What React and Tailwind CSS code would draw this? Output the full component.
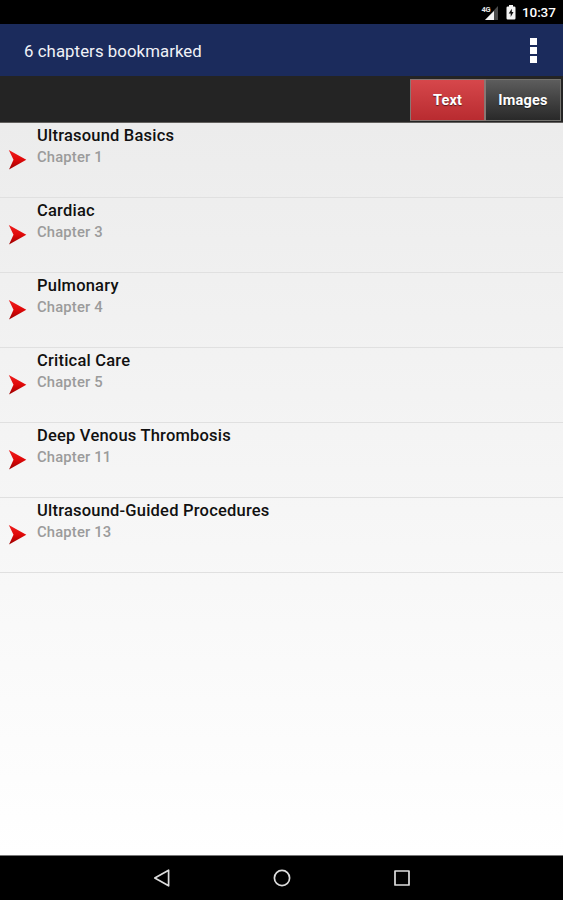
const chapters = [
  { title: "Ultrasound Basics", number: 1 },
  { title: "Cardiac", number: 3 },
  { title: "Pulmonary", number: 4 },
  { title: "Critical Care", number: 5 },
  { title: "Deep Venous Thrombosis", number: 11 },
  { title: "Ultrasound-Guided Procedures", number: 13 },
];

function StatusBar() {
  return (
    <header className="flex h-6 shrink-0 items-center justify-end bg-black pr-[7px] text-white">
      <svg width="18" height="15" viewBox="0 0 18 15" className="mr-[7px]">
        <path d="M17 1v14H4z" fill="#4b4b4b" />
        <path d="M13 6v9H4z" fill="#f5f5f5" />
        <text x="0.5" y="7" fontSize="7.5" fontWeight="700" textLength="9" fill="#e5e5e5">4G</text>
      </svg>
      <svg width="10" height="15" viewBox="0 0 10 15" className="mr-[6px]">
        <path d="M3 0h4v1.5h1.2q1.3 0 1.3 1.2v10.6q0 1.2-1.2 1.2H1.7q-1.2 0-1.2-1.2V2.7q0-1.2 1.3-1.2H3z" fill="#f5f5f5" />
        <path d="M5.8 3.8 2.7 8.5h2v3.4l2.8-4.8h-1.7z" fill="#111" />
      </svg>
      <span className="w-[34px] whitespace-nowrap text-[13.5px] font-medium leading-[25px] tracking-[-0.1px]">10:37</span>
    </header>
  );
}

function TitleBar() {
  return (
    <div className="flex h-[52px] shrink-0 items-center justify-between bg-[#1b2b5c] pl-6 pr-[26px]">
      <h1 className="pt-[3px] text-[16.8px] tracking-[0.07px] text-[#f0f2f7]">6 chapters bookmarked</h1>
      <button aria-label="More options" className="flex flex-col gap-[2px]">
        <span className="size-[7px] bg-white" />
        <span className="size-[7px] bg-white" />
        <span className="size-[7px] bg-white" />
      </button>
    </div>
  );
}

function Tabs() {
  return (
    <div className="flex h-[47px] shrink-0 justify-end border-b border-[#62605e] bg-[#242424] pb-px pr-[2px] pt-[3px] text-[14.5px] font-bold text-white">
      <button className="w-[76px] border border-r-2 border-[#887774] bg-linear-to-b from-[#d6474b] to-[#b92b30] pt-[2px] tracking-[0.1px] [text-shadow:0_1px_1px_#0008]">Text</button>
      <button className="w-[75px] border-y border-r border-[#74736f] bg-linear-to-b from-[#5d5d5d] to-[#292929] pt-[2px] tracking-[0.2px] [text-shadow:0_1px_1px_#0008]">Images</button>
    </div>
  );
}

function Arrow() {
  return (
    <svg width="19" height="21" viewBox="0 0 19 21" className="ml-2 mt-[26px] shrink-0">
      <defs>
        <linearGradient id="arrow-red" x2="0" y2="1">
          <stop stopColor="#f02020" />
          <stop offset=".5" stopColor="#e00808" />
          <stop offset="1" stopColor="#990000" />
        </linearGradient>
      </defs>
      <path d="M.8 1 18.3 10.8 1 20.5 5.5 10.8z" fill="url(#arrow-red)" />
    </svg>
  );
}

function ChapterRow({ title, number }) {
  return (
    <li className="flex h-[75px] border-b border-[#e0e0e0]">
      <Arrow />
      <div className="ml-[10px] pt-[2px]">
        <h2 className="text-[16.5px] font-medium leading-[22px] tracking-[0.21px] text-[#111]">{title}</h2>
        <p className="text-[14.8px] font-medium leading-[21px] tracking-[0.16px] text-[#9b9b9b]">Chapter {number}</p>
      </div>
    </li>
  );
}

function NavigationBar() {
  return (
    <nav className="flex h-[45px] shrink-0 items-center justify-center gap-[102px] border-t border-[#777] bg-black">
      <button aria-label="Back">
        <svg width="18" height="18" viewBox="0 0 18 18" fill="none" stroke="#ddd" strokeWidth="1.7" strokeLinejoin="round">
          <path d="M15.6 1.2v15.6L1.8 9z" />
        </svg>
      </button>
      <button aria-label="Home">
        <svg width="18" height="18" viewBox="0 0 18 18" fill="none" stroke="#ddd" strokeWidth="1.7">
          <circle cx="9" cy="9" r="7.6" />
        </svg>
      </button>
      <button aria-label="Recent apps">
        <svg width="18" height="18" viewBox="0 0 18 18" fill="none" stroke="#ddd" strokeWidth="1.7" strokeLinejoin="round">
          <rect x="2" y="2" width="14" height="14" />
        </svg>
      </button>
    </nav>
  );
}

export default function App() {
  return (
    <div className="flex h-screen w-full flex-col overflow-hidden bg-white font-[Roboto,sans-serif]">
      <StatusBar />
      <TitleBar />
      <Tabs />
      <main className="min-h-0 flex-1 bg-linear-to-b from-[#ececec] to-white">
        <ul>
          {chapters.map((chapter) => (
            <ChapterRow key={chapter.number} title={chapter.title} number={chapter.number} />
          ))}
        </ul>
      </main>
      <NavigationBar />
    </div>
  );
}
